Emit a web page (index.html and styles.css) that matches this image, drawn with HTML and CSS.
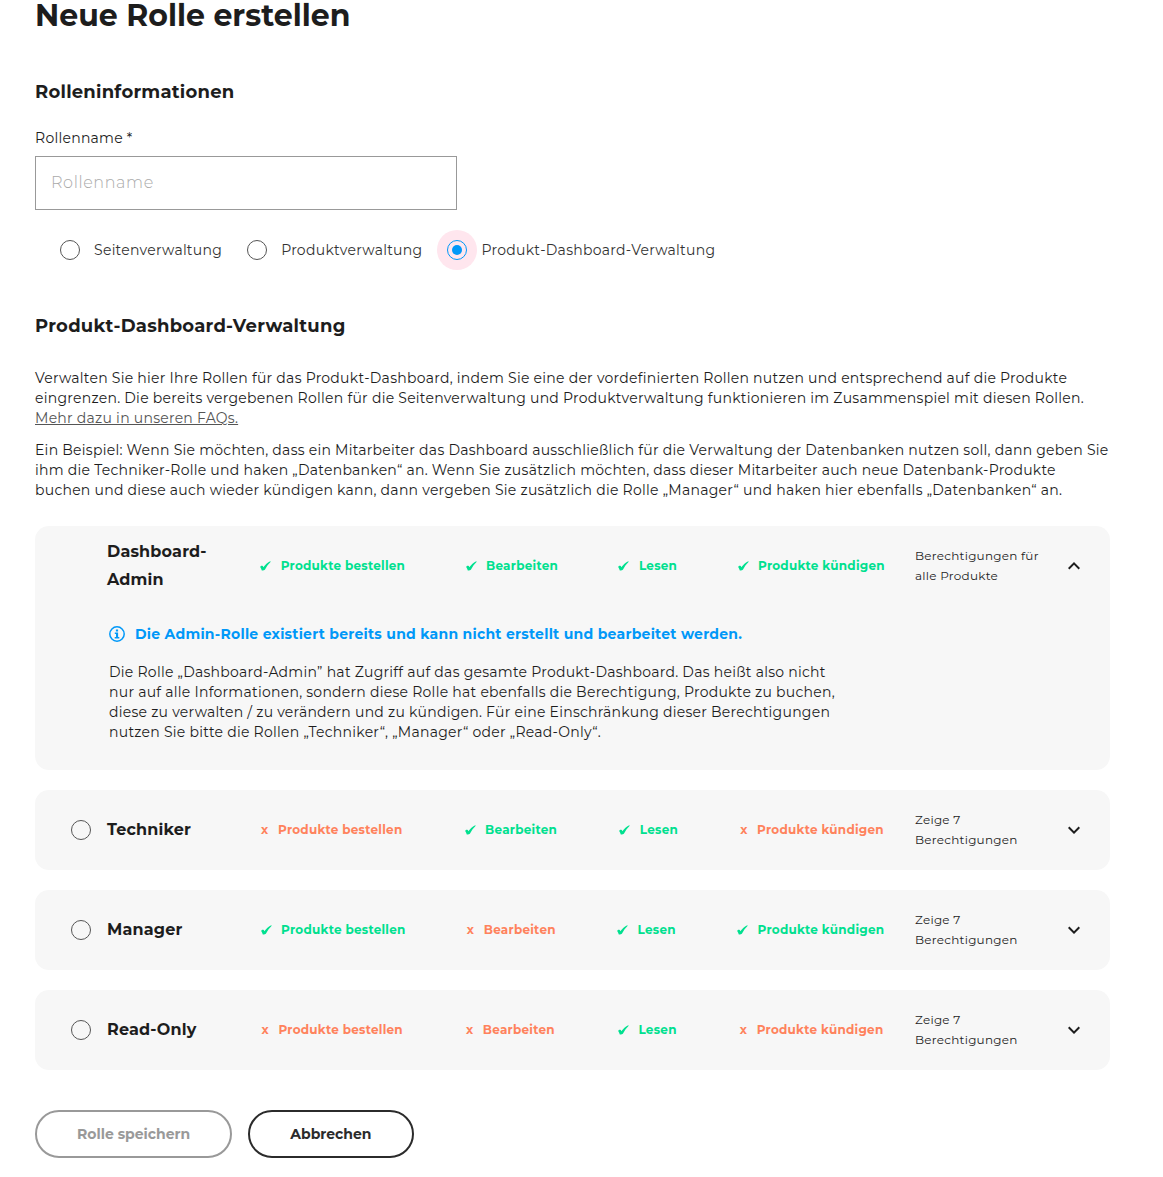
FILE: index.html
```
<!DOCTYPE html>
<html lang="de">
<head>
<meta charset="utf-8">
<title>Neue Rolle erstellen</title>
<link rel="stylesheet" href="styles.css">
</head>
<body>
<svg class="sprite" aria-hidden="true">
  <symbol id="check" viewBox="0 0 11 10"><path d="M.2 6C.5 4.800 2 4.300 2.700 5c.3.3.5.8.7 1.200C4.800 4.200 7.200 1.700 10.200.2l.5.5C8.200 3.200 6.400 5.700 4.900 8.800c-.7.7-2.200 1-3.100.700C1.400 8.400 1 7.100.2 6z"/></symbol>
  <symbol id="down" viewBox="0 0 24 24"><path d="M7.410 8.590 12 13.170l4.590-4.580L18 10l-6 6-6-6z"/></symbol>
  <symbol id="up" viewBox="0 0 24 24"><path d="M7.410 15.410 12 10.830l4.590 4.580L18 14l-6-6-6 6z"/></symbol>
</svg>
<main class="page">
  <h1 class="title">Neue Rolle erstellen</h1>

  <h2 class="heading">Rolleninformationen</h2>
  <label class="label" for="name">Rollenname *</label>
  <input class="input" id="name" type="text" placeholder="Rollenname">
  <div class="areas">
    <label class="area"><span class="halo"><span class="radio"></span></span>Seitenverwaltung</label>
    <label class="area"><span class="halo"><span class="radio"></span></span>Produktverwaltung</label>
    <label class="area"><span class="halo halo-on"><span class="radio radio-on"></span></span>Produkt-Dashboard-Verwaltung</label>
  </div>

  <h2 class="heading heading-second">Produkt-Dashboard-Verwaltung</h2>
  <p class="text">Verwalten Sie hier Ihre Rollen für das Produkt-Dashboard, indem Sie eine der vordefinierten Rollen nutzen und entsprechend auf die Produkte<br>eingrenzen. Die bereits vergebenen Rollen für die Seitenverwaltung und Produktverwaltung funktionieren im Zusammenspiel mit diesen Rollen.<br><a class="link" href="#">Mehr dazu in unseren FAQs.</a></p>
  <p class="text">Ein Beispiel: Wenn Sie möchten, dass ein Mitarbeiter das Dashboard ausschließlich für die Verwaltung der Datenbanken nutzen soll, dann geben Sie<br>ihm die Techniker-Rolle und haken „Datenbanken“ an. Wenn Sie zusätzlich möchten, dass dieser Mitarbeiter auch neue Datenbank-Produkte<br>buchen und diese auch wieder kündigen kann, dann vergeben Sie zusätzlich die Rolle „Manager“ und haken hier ebenfalls „Datenbanken“ an.</p>

  <div class="roles">
    <section class="card">
      <div class="row">
        <span class="pick"></span>
        <h3 class="name">Dashboard-<br>Admin</h3>
        <div class="perms">
          <span class="perm yes"><svg class="check"><use href="#check"/></svg>Produkte bestellen</span>
          <span class="perm yes"><svg class="check"><use href="#check"/></svg>Bearbeiten</span>
          <span class="perm yes"><svg class="check"><use href="#check"/></svg>Lesen</span>
          <span class="perm yes"><svg class="check"><use href="#check"/></svg>Produkte kündigen</span>
        </div>
        <span class="count">Berechtigungen für<br>alle Produkte</span>
        <svg class="chevron"><use href="#up"/></svg>
      </div>
      <div class="detail">
        <div class="info">
          <svg class="info-icon" viewBox="0 0 16 16"><circle cx="8" cy="8" r="7.200" fill="none" stroke="currentColor" stroke-width="1.500"/><path d="M6.900 3.500h2.200v2H6.900zM5.800 6.500h3.300V11h1.200v1.400H5.700V11H7V7.900H5.800z" fill="currentColor"/></svg>
          Die Admin-Rolle existiert bereits und kann nicht erstellt und bearbeitet werden.
        </div>
        <p class="text">Die Rolle „Dashboard-Admin” hat Zugriff auf das gesamte Produkt-Dashboard. Das heißt also nicht<br>nur auf alle Informationen, sondern diese Rolle hat ebenfalls die Berechtigung, Produkte zu buchen,<br>diese zu verwalten / zu verändern und zu kündigen. Für eine Einschränkung dieser Berechtigungen<br>nutzen Sie bitte die Rollen „Techniker“, „Manager“ oder „Read-Only“.</p>
      </div>
    </section>

    <section class="card">
      <div class="row">
        <span class="pick"><span class="radio"></span></span>
        <h3 class="name">Techniker</h3>
        <div class="perms">
          <span class="perm no"><span>x</span>Produkte bestellen</span>
          <span class="perm yes"><svg class="check"><use href="#check"/></svg>Bearbeiten</span>
          <span class="perm yes"><svg class="check"><use href="#check"/></svg>Lesen</span>
          <span class="perm no"><span>x</span>Produkte kündigen</span>
        </div>
        <span class="count">Zeige 7<br>Berechtigungen</span>
        <svg class="chevron"><use href="#down"/></svg>
      </div>
    </section>

    <section class="card">
      <div class="row">
        <span class="pick"><span class="radio"></span></span>
        <h3 class="name">Manager</h3>
        <div class="perms">
          <span class="perm yes"><svg class="check"><use href="#check"/></svg>Produkte bestellen</span>
          <span class="perm no"><span>x</span>Bearbeiten</span>
          <span class="perm yes"><svg class="check"><use href="#check"/></svg>Lesen</span>
          <span class="perm yes"><svg class="check"><use href="#check"/></svg>Produkte kündigen</span>
        </div>
        <span class="count">Zeige 7<br>Berechtigungen</span>
        <svg class="chevron"><use href="#down"/></svg>
      </div>
    </section>

    <section class="card">
      <div class="row">
        <span class="pick"><span class="radio"></span></span>
        <h3 class="name">Read-Only</h3>
        <div class="perms">
          <span class="perm no"><span>x</span>Produkte bestellen</span>
          <span class="perm no"><span>x</span>Bearbeiten</span>
          <span class="perm yes"><svg class="check"><use href="#check"/></svg>Lesen</span>
          <span class="perm no"><span>x</span>Produkte kündigen</span>
        </div>
        <span class="count">Zeige 7<br>Berechtigungen</span>
        <svg class="chevron"><use href="#down"/></svg>
      </div>
    </section>
  </div>

  <div class="actions">
    <button class="button button-save" type="button" disabled>Rolle speichern</button>
    <button class="button" type="button">Abbrechen</button>
  </div>
</main>
</body>
</html>
```
FILE: styles.css
```
* { box-sizing: border-box; margin: 0; padding: 0; }

body {
  background: #fff;
  color: #1d1d1d;
  font: 400 14px/20px Montserrat, Inter, "Liberation Sans", sans-serif;
  letter-spacing: .256px;
}

.sprite { display: none; }

.page {
  display: flex;
  flex-direction: column;
  width: 1110px;
  padding-left: 35px;
}

.title { font-size: 30px; line-height: 32px; font-weight: 700; letter-spacing: 0; }

.heading { margin-top: 46px; font-size: 18px; line-height: 28px; font-weight: 700; letter-spacing: .23px; }
.heading-second { margin: 42px 0 28px; letter-spacing: .256px; }

.label { margin-top: 22px; }

.input {
  width: 422px;
  height: 54px;
  margin-top: 8px;
  padding: 0 15px 2px;
  border: 1px solid #999;
  background: #fff;
  font: 300 16px/20px Montserrat, Inter, sans-serif;
  letter-spacing: .6px;
}
.input::placeholder { color: #aaa; opacity: 1; }

.areas { display: flex; gap: 15px; margin: 20px 0 0 15px; }
.area { display: flex; align-items: center; gap: 4px; color: #333; letter-spacing: .28px; }
.halo {
  display: flex;
  align-items: center;
  justify-content: center;
  width: 40px;
  height: 40px;
  border-radius: 50%;
}
.halo-on { background: #ffe6ee; }

.radio {
  display: flex;
  align-items: center;
  justify-content: center;
  width: 20px;
  height: 20px;
  border: 1px solid #555;
  border-radius: 50%;
}
.radio-on { border-color: #0098f8; }
.radio-on::after {
  content: "";
  width: 10px;
  height: 10px;
  border-radius: 50%;
  background: #0098f8;
}

.text { white-space: nowrap; }
.text + .text { margin-top: 12px; }
.link { color: #555; text-decoration: underline; }

.roles { display: flex; flex-direction: column; gap: 20px; margin-top: 26px; }
.card { border-radius: 14px; background: #f7f7f7; }
.row { display: flex; align-items: center; height: 80px; }
.pick { display: flex; justify-content: flex-end; width: 56px; margin-right: 16px; }
.name { width: 123px; font-size: 16px; line-height: 28px; font-weight: 700; letter-spacing: .18px; }

.perms { display: flex; justify-content: space-around; width: 685px; }
.perm {
  display: flex;
  align-items: center;
  gap: 9.5px;
  font-size: 12px;
  font-weight: 700;
  white-space: nowrap;
}
.yes { color: #00e08f; }
.no { color: #ff825c; }
.check { width: 11px; height: 10px; fill: currentColor; }

.count { width: 147px; font-size: 12px; white-space: nowrap; }
.chevron { width: 24px; height: 24px; fill: #1d1d1d; }

.detail { padding: 18px 0 28px 74px; }
.info {
  display: flex;
  align-items: center;
  gap: 10px;
  margin-bottom: 18px;
  color: #0098f8;
  font-weight: 700;
}
.info-icon { width: 16px; height: 16px; }

.actions { display: flex; gap: 16px; margin-top: 40px; }
.button {
  height: 48px;
  padding: 0 40px;
  border: 2px solid #2b2b2b;
  border-radius: 24px;
  background: #fff;
  color: #2b2b2b;
  font: 700 14px/20px Montserrat, Inter, sans-serif;
}
.button-save { border-color: #999; color: #999; }
```
